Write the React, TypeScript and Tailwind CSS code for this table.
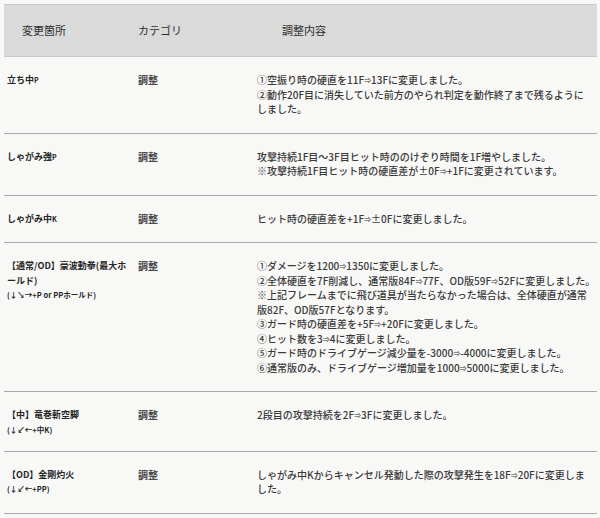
import React from "react";

// Patch-note table: move / category / adjustment text.
type Row = {
  name: React.ReactNode;
  cmd?: string;
  lines: string[];
};

const ROWS: Row[] = [
  {
    name: (
      <>
        立ち中<span className="text-[7px]">P</span>
      </>
    ),
    lines: [
      "①空振り時の硬直を11F⇒13Fに変更しました。",
      "②動作20F目に消失していた前方のやられ判定を動作終了まで残るように",
      "しました。",
    ],
  },
  {
    name: (
      <>
        しゃがみ強<span className="text-[7px]">P</span>
      </>
    ),
    lines: [
      "攻撃持続1F目～3F目ヒット時ののけぞり時間を1F増やしました。",
      "※攻撃持続1F目ヒット時の硬直差が±0F⇒+1Fに変更されています。",
    ],
  },
  {
    name: (
      <>
        しゃがみ中<span className="text-[7px]">K</span>
      </>
    ),
    lines: ["ヒット時の硬直差を+1F⇒±0Fに変更しました。"],
  },
  {
    name: (
      <>
        【通常/OD】豪波動拳(最大ホ
        <br />
        ールド)
      </>
    ),
    cmd: "(↓↘→+P or PPホールド)",
    lines: [
      "①ダメージを1200⇒1350に変更しました。",
      "②全体硬直を7F削減し、通常版84F⇒77F、OD版59F⇒52Fに変更しました。",
      "※上記フレームまでに飛び道具が当たらなかった場合は、全体硬直が通常",
      "版82F、OD版57Fとなります。",
      "③ガード時の硬直差を+5F⇒+20Fに変更しました。",
      "④ヒット数を3⇒4に変更しました。",
      "⑤ガード時のドライブゲージ減少量を-3000⇒-4000に変更しました。",
      "⑥通常版のみ、ドライブゲージ増加量を1000⇒5000に変更しました。",
    ],
  },
  {
    name: "【中】竜巻斬空脚",
    cmd: "(↓↙←+中K)",
    lines: ["2段目の攻撃持続を2F⇒3Fに変更しました。"],
  },
  {
    name: "【OD】金剛灼火",
    cmd: "(↓↙←+PP)",
    lines: [
      "しゃがみ中Kからキャンセル発動した際の攻撃発生を18F⇒20Fに変更しま",
      "した。",
    ],
  },
];

// The arrow sits small in the source, like a half-width glyph.
function Fmt({ text }: { text: string }) {
  const parts = text.split("⇒");
  return (
    <>
      {parts.map((p, i) => (
        <React.Fragment key={i}>
          {i > 0 && <span className="text-[7px] align-[1px]">⇒</span>}
          {p}
        </React.Fragment>
      ))}
    </>
  );
}

const COLS = "grid grid-cols-[134px_119px_1fr]";

export default function App() {
  return (
    <div
      className="h-[518px] w-[600px] overflow-hidden bg-[#f8f8f7] pl-[4px] pr-[3px] pt-[4px] text-[#363636]"
      style={{ fontFamily: '"Noto Sans CJK JP", "Noto Sans", sans-serif' }}
    >
      {/* header */}
      <div className={`${COLS} h-[53px] items-center border-y border-[#c9c9c9] bg-[#dadada] text-[11px] text-[#2e2e2e]`}>
        <div className="pl-[18px]">変更箇所</div>
        <div>カテゴリ</div>
        <div className="pl-[25px]">調整内容</div>
      </div>

      {ROWS.map((r, i) => (
        <div key={i} className={`${COLS} border-b border-[#a9a9a9] py-4 leading-[14.5px]`}>
          <div className="whitespace-nowrap pl-[3px] text-[9px] font-bold text-[#262626]">
            <div>{r.name}</div>
            {r.cmd && <div className="mt-[1px] text-[7.5px] leading-[11px]">{r.cmd}</div>}
          </div>
          <div className="text-[10px] font-bold text-[#4a4a4a]">調整</div>
          <div className="whitespace-nowrap text-[10px] font-medium text-[#3a3a3a]">
            {r.lines.map((l, j) => (
              <div key={j}>
                <Fmt text={l} />
              </div>
            ))}
          </div>
        </div>
      ))}
    </div>
  );
}
